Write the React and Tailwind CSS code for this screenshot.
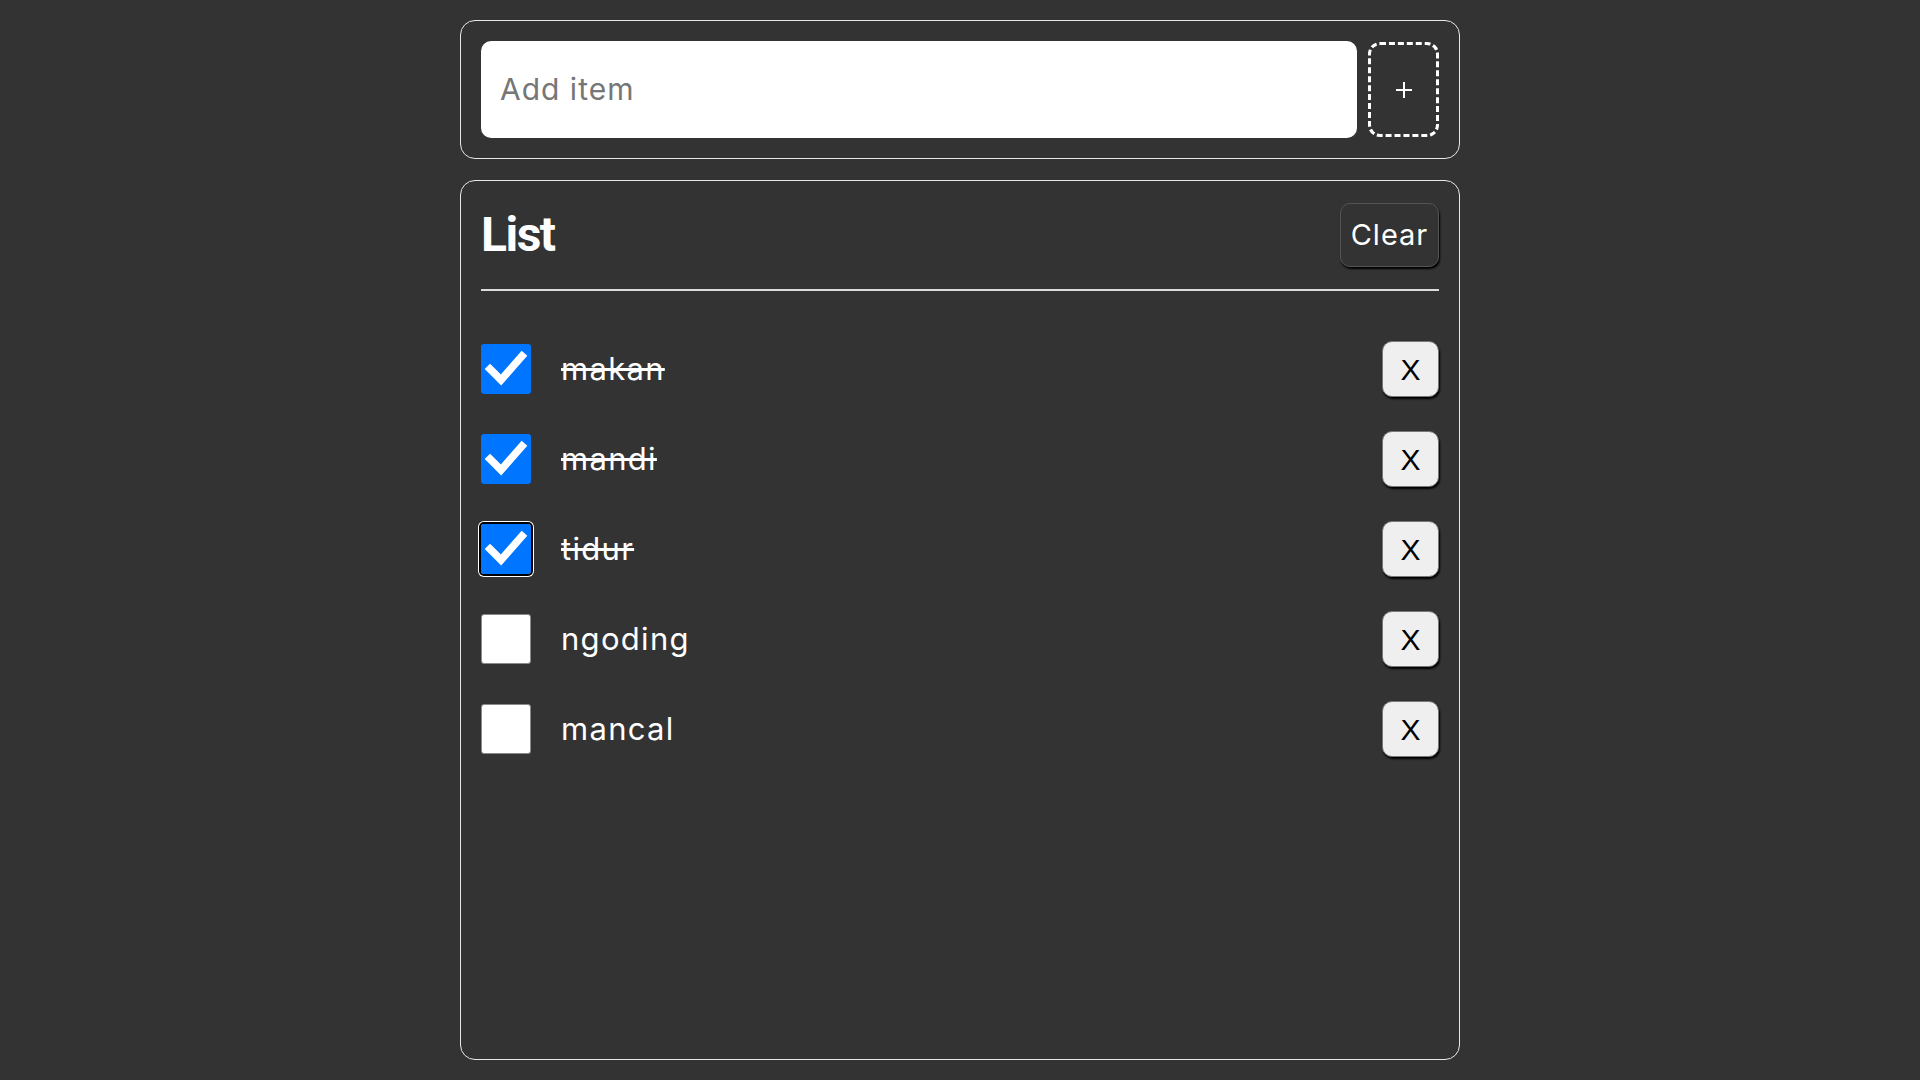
import React, { useState } from 'react';

const Check = () => (
  <svg viewBox="0 0 50 50" className="w-full h-full">
    <path d="M9 25 L20 36 L41 12" fill="none" stroke="#fff" strokeWidth="7.5" strokeLinecap="square" />
  </svg>
);

const Plus = () => (
  <svg viewBox="0 0 18 18" className="w-[18px] h-[18px]">
    <path d="M9 1 V17 M1 9 H17" stroke="#fff" strokeWidth="2" />
  </svg>
);

const initialItems = [
  { name: 'makan', done: true },
  { name: 'mandi', done: true },
  { name: 'tidur', done: true, focus: true },
  { name: 'ngoding', done: false },
  { name: 'mancal', done: false },
];

const App = () => {
  const [items] = useState(initialItems);

  return (
    <div className="min-h-screen bg-[#333333] text-white font-['Inter',sans-serif]">
      <div className="w-[1000px] mx-auto pt-[20px]">
        {/* Add item box */}
        <div className="border border-[#e8e8e8] rounded-[15px] p-[20px] flex items-center gap-[11px]">
          <div className="flex-1 h-[97px] bg-white rounded-[10px] flex items-center px-[19px]">
            <span className="text-[30px] text-[#767676] tracking-[1px]">Add item</span>
          </div>
          <div className="w-[71px] h-[95px] border-[3px] border-dashed border-white rounded-[12px] flex items-center justify-center">
            <Plus />
          </div>
        </div>

        {/* List box */}
        <div className="mt-[21px] h-[880px] border border-[#e8e8e8] rounded-[15px] px-[20px] pt-[22px]">
          <div className="flex items-center justify-between">
            <h1 className="text-[48px] font-bold leading-none font-['Roboto',sans-serif] tracking-[-1.5px]">List</h1>
            <div className="w-[99px] h-[64px] rounded-[10px] border border-[#555] bg-[#333] shadow-[1px_2px_2px_#000] flex items-center justify-center text-[29px] tracking-[1px]">
              Clear
            </div>
          </div>
          <div className="h-[2px] bg-[#dcdcdc] mt-[22px]"></div>

          <div className="mt-[50px] flex flex-col gap-[34px]">
            {items.map((item) => (
              <div key={item.name} className="flex items-center h-[56px]">
                {item.done ? (
                  <div className={`w-[50px] h-[50px] rounded-[3px] bg-[#0075ff] ${item.focus ? 'outline outline-2 outline-black ring-[3px] ring-white' : ''}`}>
                    <Check />
                  </div>
                ) : (
                  <div className="w-[50px] h-[50px] rounded-[3px] bg-white border border-[#8a8a8a]"></div>
                )}
                <span className={`ml-[30px] text-[31px] tracking-[1.3px] ${item.done ? 'line-through' : ''}`}>
                  {item.name}
                </span>
                <div className="ml-auto w-[57px] h-[56px] rounded-[10px] bg-[#efefef] border border-[#777] shadow-[1px_2px_2px_#000] flex items-center justify-center text-black text-[30px] font-['Liberation_Sans',sans-serif]">
                  X
                </div>
              </div>
            ))}
          </div>
        </div>
      </div>
    </div>
  );
};

export default App;
